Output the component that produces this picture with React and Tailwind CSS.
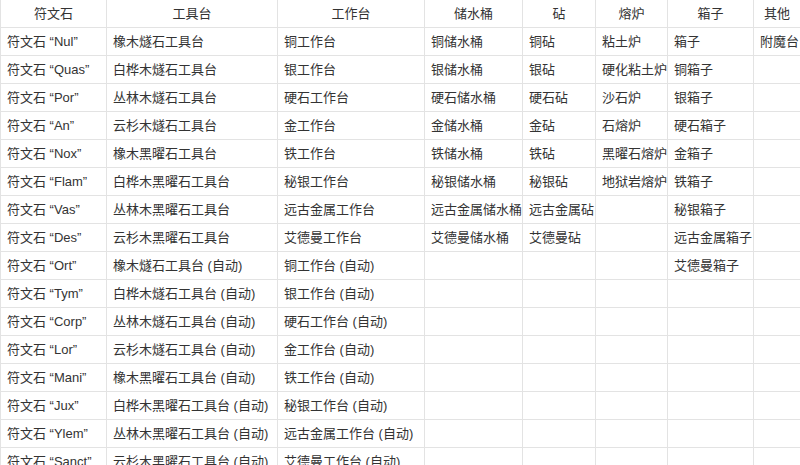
import React from 'react';

const headers = ['符文石', '工具台', '工作台', '储水桶', '砧', '熔炉', '箱子', '其他'];
const widths = ['w-[106px]', 'w-[171px]', 'w-[147px]', 'w-[98px]', 'w-[73px]', 'w-[72px]', 'w-[86px]', 'w-[47px]'];

const runes = ['Nul', 'Quas', 'Por', 'An', 'Nox', 'Flam', 'Vas', 'Des', 'Ort', 'Tym', 'Corp', 'Lor', 'Mani', 'Jux', 'Ylem', 'Sanct'];
const toolBenches = ['橡木燧石工具台', '白桦木燧石工具台', '丛林木燧石工具台', '云杉木燧石工具台', '橡木黑曜石工具台', '白桦木黑曜石工具台', '丛林木黑曜石工具台', '云杉木黑曜石工具台'];
const workBenches = ['铜工作台', '银工作台', '硬石工作台', '金工作台', '铁工作台', '秘银工作台', '远古金属工作台', '艾德曼工作台'];
const barrels = ['铜储水桶', '银储水桶', '硬石储水桶', '金储水桶', '铁储水桶', '秘银储水桶', '远古金属储水桶', '艾德曼储水桶'];
const anvils = ['铜砧', '银砧', '硬石砧', '金砧', '铁砧', '秘银砧', '远古金属砧', '艾德曼砧'];
const furnaces = ['粘土炉', '硬化粘土炉', '沙石炉', '石熔炉', '黑曜石熔炉', '地狱岩熔炉'];
const chests = ['箱子', '铜箱子', '银箱子', '硬石箱子', '金箱子', '铁箱子', '秘银箱子', '远古金属箱子', '艾德曼箱子'];
const others = ['附魔台'];

// first 8 rows are manual, the next 8 are the (自动) variants
const rows = runes.map((r, i) => [
    `符文石 “${r}”`,
    i < 8 ? toolBenches[i] : `${toolBenches[i - 8]} (自动)`,
    i < 8 ? workBenches[i] : `${workBenches[i - 8]} (自动)`,
    barrels[i] || '',
    anvils[i] || '',
    furnaces[i] || '',
    chests[i] || '',
    others[i] || '',
]);

const App = () => {
    return (
        <div className="w-[800px] h-[465px] overflow-hidden bg-white">
            <table
                className="table-fixed border-collapse w-[800px] text-[13px] text-[#333]"
                style={{ fontFamily: '"Liberation Sans", "Noto Sans CJK SC", sans-serif' }}
            >
                <colgroup>
                    {widths.map((w, i) => (
                        <col key={i} className={w} />
                    ))}
                </colgroup>
                <thead>
                    <tr className="h-[27px]">
                        {headers.map((h, i) => (
                            <th
                                key={i}
                                className="border-x border-b border-[#e3e3e3] font-normal text-center p-0 leading-none whitespace-nowrap"
                            >
                                {h}
                            </th>
                        ))}
                    </tr>
                </thead>
                <tbody>
                    {rows.map((row, i) => (
                        <tr key={i} className="h-[28px]">
                            {row.map((cell, j) => (
                                <td
                                    key={j}
                                    className="border border-[#e3e3e3] px-[6px] py-0 leading-none whitespace-nowrap overflow-hidden"
                                >
                                    {cell}
                                </td>
                            ))}
                        </tr>
                    ))}
                </tbody>
            </table>
        </div>
    );
};

export default App;
